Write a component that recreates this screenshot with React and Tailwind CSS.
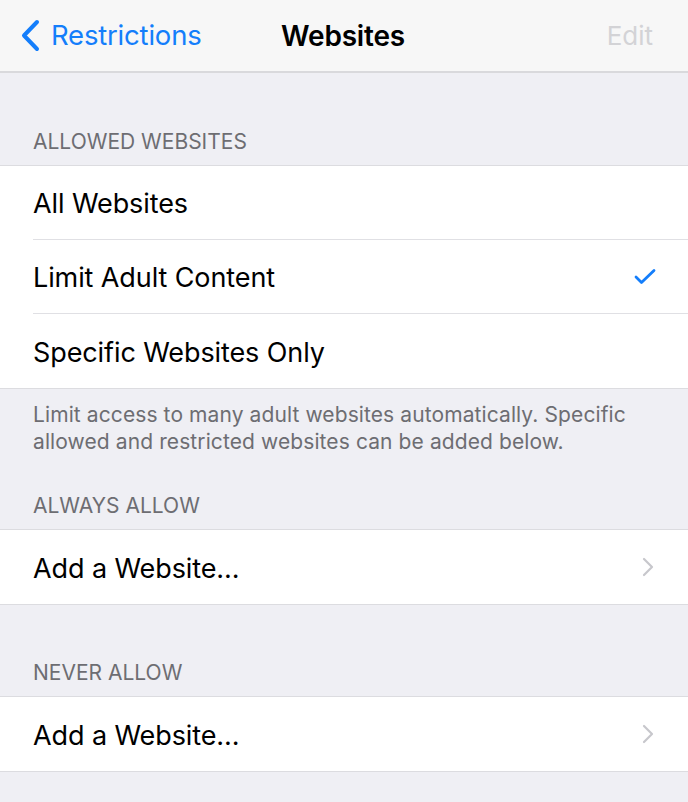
function Chevron() {
  return (
    <svg className="w-[12px] h-[20px]" viewBox="0 0 12 20" fill="none" stroke="#c7c7cc" strokeWidth="2.2" strokeLinecap="round" strokeLinejoin="round">
      <path d="M2 2l8 8-8 8" />
    </svg>
  )
}

function Row({ label, last, right }) {
  return (
    <div className="bg-white pl-[33px]">
      <div className={`h-[74px] pt-[4px] flex items-center justify-between pr-[34px] ${last ? '' : 'border-b border-[#e0e0e4]'}`}>
        <span className="text-[27px] text-black tracking-[-0.1px]">{label}</span>
        <span className="-mt-[4px]">{right}</span>
      </div>
    </div>
  )
}

function SectionHeader({ children, top }) {
  return (
    <div className={`px-[33px] pb-[13px] ${top} text-[21px] text-[#6d6d72] leading-none border-b border-[#dcdce0]`}>
      {children}
    </div>
  )
}

export default function App() {
  const allowed = [
    { label: 'All Websites' },
    {
      label: 'Limit Adult Content',
      right: (
        <svg className="w-[22px] h-[17px] mr-[-2px] block" viewBox="0 0 22 17" fill="none" stroke="#147efb" strokeWidth="2.8" strokeLinecap="round" strokeLinejoin="round">
          <path d="M2 9l5.5 5.5L20 2.5" />
        </svg>
      ),
    },
    { label: 'Specific Websites Only' },
  ]

  return (
    <div className="w-[688px] h-[802px] overflow-hidden bg-[#efeff4] font-['Inter','Liberation_Sans',sans-serif]">
      {/* Nav bar */}
      <div className="h-[73px] bg-[#f7f7f7] border-b-2 border-[#d9d9dc] flex items-center px-[20px] relative">
        <div className="flex items-center gap-[11px] text-[#147efb]">
          <svg className="w-[20px] h-[33px]" viewBox="0 0 20 33" fill="none" stroke="#147efb" strokeWidth="4" strokeLinecap="round" strokeLinejoin="round">
            <path d="M17 3L4 16.5 17 30" />
          </svg>
          <span className="text-[27.5px] tracking-[-0.2px]">Restrictions</span>
        </div>
        <div className="absolute left-0 right-0 text-center pointer-events-none">
          <span className="text-[28px] font-semibold text-black tracking-[-0.2px] ml-[-2px]">Websites</span>
        </div>
        <span className="ml-auto mr-[15px] text-[26px] text-[#d3d3d6]">Edit</span>
      </div>

      {/* Allowed websites */}
      <SectionHeader top="pt-[58px]">ALLOWED WEBSITES</SectionHeader>
      <div>
        {allowed.map((r, i) => (
          <Row key={r.label} label={r.label} right={r.right} last={i === allowed.length - 1} />
        ))}
      </div>
      <div className="border-t border-[#dcdce0] px-[33px] pt-[12px] text-[21px] leading-[27px] text-[#6d6d72] tracking-[0.1px] whitespace-nowrap">
        Limit access to many adult websites automatically. Specific
        <br />
        allowed and restricted websites can be added below.
      </div>

      <SectionHeader top="pt-[40px]">ALWAYS ALLOW</SectionHeader>
      <Row label="Add a Website..." last right={<Chevron />} />

      <div className="border-t border-[#dcdce0]">
        <SectionHeader top="pt-[57px]">NEVER ALLOW</SectionHeader>
      </div>
      <Row label="Add a Website..." last right={<Chevron />} />
      <div className="border-t border-[#dcdce0]" />
    </div>
  )
}
